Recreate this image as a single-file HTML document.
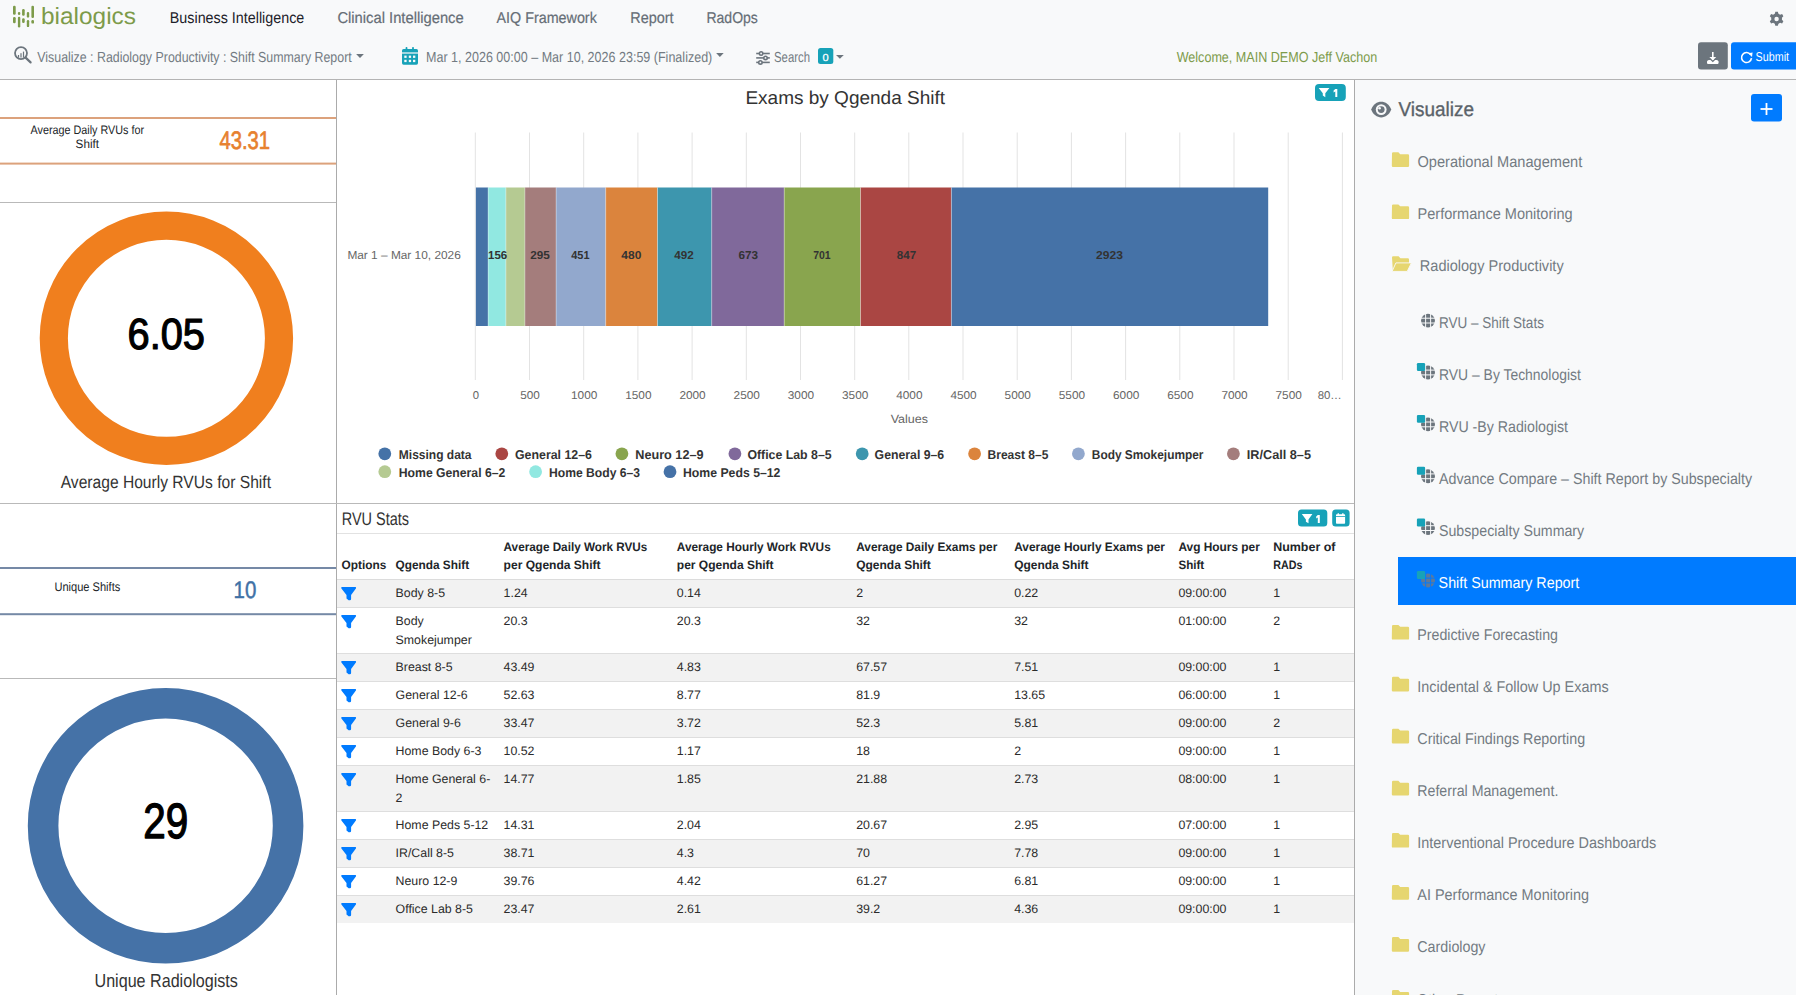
<!DOCTYPE html>
<html lang="en"><head><meta charset="utf-8">
<title>bialogics - Shift Summary Report</title>
<style>
html,body{margin:0;padding:0;background:#ffffff;overflow:hidden;}
body{width:1796px;height:995px;position:relative;font-family:"Liberation Sans",sans-serif;}
svg{position:absolute;left:0;top:0;display:block;}
text{font-family:"Liberation Sans",sans-serif;white-space:pre;text-rendering:geometricPrecision;}
</style></head>
<body>
<svg width="1796" height="995" viewBox="0 0 1796 995">
<rect x="0" y="0" width="1796" height="79" fill="#f8f9fa"/>
<rect x="0" y="79" width="1796" height="1" fill="#b4b4b4"/>
<rect x="0" y="80" width="336" height="915" fill="#ffffff"/>
<rect x="336" y="80" width="1" height="915" fill="#ababab"/>
<rect x="337" y="80" width="1017" height="915" fill="#ffffff"/>
<rect x="1354" y="80" width="1" height="915" fill="#ababab"/>
<rect x="1355" y="80" width="441" height="915" fill="#f8f9fa"/>
<rect x="13.0" y="5.7" width="2.7" height="9.0" fill="#7d9b4a" rx="1.2"/>
<rect x="13.0" y="17.1" width="2.7" height="6.2" fill="#7d9b4a" rx="1.2"/>
<rect x="17.9" y="11.9" width="2.4" height="3.0" fill="#7d9b4a" rx="1.2"/>
<rect x="17.9" y="16.8" width="2.4" height="10.6" fill="#7d9b4a" rx="1.2"/>
<rect x="22.1" y="9.0" width="2.6" height="6.7" fill="#7d9b4a" rx="1.2"/>
<rect x="22.1" y="18.2" width="2.6" height="4.8" fill="#7d9b4a" rx="1.2"/>
<rect x="26.8" y="11.9" width="2.4" height="5.7" fill="#7d9b4a" rx="1.2"/>
<rect x="26.8" y="20.0" width="2.4" height="7.1" fill="#7d9b4a" rx="1.2"/>
<rect x="31.4" y="5.7" width="2.6" height="12.2" fill="#7d9b4a" rx="1.2"/>
<rect x="31.4" y="20.0" width="2.6" height="3.6" fill="#7d9b4a" rx="1.2"/>
<text x="41.0" y="24" font-size="23.50" fill="#7d9b4a" textLength="95.0" lengthAdjust="spacingAndGlyphs">bialogics</text>
<text x="169.8" y="23" font-size="15.70" fill="#1d2129" textLength="134.5" lengthAdjust="spacingAndGlyphs">Business Intelligence</text>
<text x="337.4" y="23" font-size="15.70" fill="#666e76" textLength="126.3" lengthAdjust="spacingAndGlyphs" stroke="#666e76" stroke-width="0.2" stroke-linejoin="round">Clinical Intelligence</text>
<text x="496.5" y="23" font-size="15.70" fill="#666e76" textLength="100.3" lengthAdjust="spacingAndGlyphs" stroke="#666e76" stroke-width="0.2" stroke-linejoin="round">AIQ Framework</text>
<text x="630.2" y="23" font-size="15.70" fill="#666e76" textLength="43.4" lengthAdjust="spacingAndGlyphs" stroke="#666e76" stroke-width="0.2" stroke-linejoin="round">Report</text>
<text x="706.4" y="23" font-size="15.70" fill="#666e76" textLength="51.5" lengthAdjust="spacingAndGlyphs" stroke="#666e76" stroke-width="0.2" stroke-linejoin="round">RadOps</text>
<g transform="translate(1776.6,19.1) scale(1.06)" fill="#6c757d"><path d="M-1.2,-6.9 h2.4 l0.5,1.9 a5,5 0 0 1 1.6,0.9 l1.9,-0.6 l1.2,2.1 l-1.4,1.4 a5,5 0 0 1 0,1.8 l1.4,1.4 l-1.2,2.1 l-1.9,-0.6 a5,5 0 0 1 -1.6,0.9 l-0.5,1.9 h-2.4 l-0.5,-1.9 a5,5 0 0 1 -1.6,-0.9 l-1.9,0.6 l-1.2,-2.1 l1.4,-1.4 a5,5 0 0 1 0,-1.8 l-1.4,-1.4 l1.2,-2.1 l1.9,0.6 a5,5 0 0 1 1.6,-0.9 z"/><circle r="2.1" fill="#f8f9fa"/></g>
<g fill="none" stroke="#6c757d" stroke-width="2"><circle cx="21" cy="53.1" r="6.0" stroke-width="1.8"/><line x1="25.6" y1="57.6" x2="30.6" y2="62.4" stroke-width="2.2" stroke-linecap="round"/></g>
<rect x="17.9" y="55.0" width="1.2" height="2.6" fill="#6c757d"/>
<rect x="20.4" y="53.2" width="1.2" height="4.4" fill="#6c757d"/>
<rect x="22.9" y="51.6" width="1.2" height="6.0" fill="#6c757d"/>
<text x="37.3" y="62" font-size="14.53" fill="#737b82" textLength="314.4" lengthAdjust="spacingAndGlyphs">Visualize : Radiology Productivity : Shift Summary Report</text>
<path d="M356.1,54.1 h7.8 l-3.9,3.8 z" fill="#6c757d"/>
<g fill="#17a2b8"><rect x="402" y="49" width="16" height="15.7" rx="1.6"/><rect x="405.6" y="46.9" width="1.8" height="4" rx="0.8"/><rect x="412.1" y="46.9" width="1.8" height="4" rx="0.8"/></g>
<rect x="404.3" y="55.6" width="2.3" height="2.3" fill="#f8f9fa"/>
<rect x="408.8" y="55.6" width="2.3" height="2.3" fill="#f8f9fa"/>
<rect x="413.0" y="55.6" width="2.3" height="2.3" fill="#f8f9fa"/>
<rect x="404.3" y="59.8" width="2.3" height="2.3" fill="#f8f9fa"/>
<rect x="408.8" y="59.8" width="2.3" height="2.3" fill="#f8f9fa"/>
<rect x="413.0" y="59.8" width="2.3" height="2.3" fill="#f8f9fa"/>
<rect x="402" y="52.4" width="16" height="1.2" fill="#f8f9fa"/>
<text x="426.0" y="62" font-size="14.53" fill="#737b82" textLength="286.3" lengthAdjust="spacingAndGlyphs">Mar 1, 2026 00:00 – Mar 10, 2026 23:59 (Finalized)</text>
<path d="M716.1,52.9 h7.6 l-3.8,4.1 z" fill="#6c757d"/>
<g stroke="#6c757d" stroke-width="1.6" fill="#f8f9fa"><line x1="756.2" y1="53.5" x2="769.8" y2="53.5"/><line x1="756.2" y1="57.9" x2="769.8" y2="57.9"/><line x1="756.2" y1="62.4" x2="769.8" y2="62.4"/><circle cx="761.1" cy="53.5" r="1.7"/><circle cx="765.5" cy="57.9" r="1.7"/><circle cx="760.4" cy="62.4" r="1.7"/></g>
<text x="774.0" y="62" font-size="14.53" fill="#737b82" textLength="36.0" lengthAdjust="spacingAndGlyphs">Search</text>
<rect x="818" y="48" width="15.3" height="15.9" fill="#17a2b8" rx="2.5"/>
<text x="822.6" y="61" font-size="10.17" fill="#ffffff" textLength="6.2" lengthAdjust="spacingAndGlyphs" stroke="#ffffff" stroke-width="0.25" stroke-linejoin="round">0</text>
<path d="M836.0,54.9 h7.8 l-3.9,3.9 z" fill="#6c757d"/>
<text x="1176.7" y="62" font-size="14.53" fill="#7d9b4a" textLength="200.5" lengthAdjust="spacingAndGlyphs">Welcome, MAIN DEMO Jeff Vachon</text>
<rect x="1698" y="42.2" width="29.8" height="27.3" fill="#6c757d" rx="3"/>
<g fill="#ffffff"><rect x="1712" y="52" width="1.6" height="8"/><path d="M1709.4,57 l3.4,3.6 l3.4,-3.6 z"/><path d="M1707,61.5 a2,2 0 0 1 2,-1.5 h1.5 l2.3,2.3 l2.3,-2.3 h1.5 a2,2 0 0 1 2,1.5 v1.6 a0.8,0.8 0 0 1 -0.8,0.8 h-10 a0.8,0.8 0 0 1 -0.8,-0.8 z"/></g>
<rect x="1731" y="42.2" width="70" height="27.3" fill="#007bff" rx="3"/>
<g fill="none" stroke="#ffffff" stroke-width="1.6"><path d="M1750.6,54.6 a5,5 0 1 0 0.9,3.6"/></g><path d="M1748.2,53.2 l4.4,-0.6 l-0.6,4.4 z" fill="#ffffff"/>
<text x="1755.6" y="61" font-size="12.79" fill="#ffffff" textLength="33.4" lengthAdjust="spacingAndGlyphs">Submit</text>
<rect x="0" y="117" width="336" height="2" fill="#dca27c"/>
<rect x="0" y="162.6" width="336" height="2" fill="#dca27c"/>
<text x="30.5" y="134" font-size="12.21" fill="#212529" textLength="113.5" lengthAdjust="spacingAndGlyphs">Average Daily RVUs for</text>
<text x="75.6" y="148" font-size="12.21" fill="#212529" textLength="23.4" lengthAdjust="spacingAndGlyphs">Shift</text>
<text x="219.5" y="149" font-size="25.29" fill="#e7812f" textLength="50.6" lengthAdjust="spacingAndGlyphs" stroke="#e7812f" stroke-width="0.7" stroke-linejoin="round">43.31</text>
<rect x="0" y="202" width="336" height="1" fill="#b9b9b9"/>
<circle cx="166.4" cy="338.3" r="112.6" fill="none" stroke="#f07f1e" stroke-width="28.2"/>
<text x="127.6" y="349" font-size="43.60" fill="#000000" textLength="77.4" lengthAdjust="spacingAndGlyphs" stroke="#000000" stroke-width="1.2" stroke-linejoin="round">6.05</text>
<text x="60.7" y="488" font-size="17.73" fill="#333333" textLength="210.3" lengthAdjust="spacingAndGlyphs">Average Hourly RVUs for Shift</text>
<rect x="0" y="503" width="1354" height="1" fill="#b9b9b9"/>
<rect x="0" y="567" width="336" height="2" fill="#7589a6"/>
<rect x="0" y="613.2" width="336" height="2" fill="#7589a6"/>
<text x="54.4" y="591" font-size="12.50" fill="#212529" textLength="65.9" lengthAdjust="spacingAndGlyphs">Unique Shifts</text>
<text x="233.6" y="598" font-size="23.84" fill="#3f71a6" textLength="22.7" lengthAdjust="spacingAndGlyphs" stroke="#3f71a6" stroke-width="0.5" stroke-linejoin="round">10</text>
<rect x="0" y="678" width="336" height="1" fill="#b9b9b9"/>
<circle cx="165.6" cy="825.8" r="122.5" fill="none" stroke="#4572a7" stroke-width="30.6"/>
<text x="143.2" y="838" font-size="49.42" fill="#000000" textLength="45.0" lengthAdjust="spacingAndGlyphs" stroke="#000000" stroke-width="1.3" stroke-linejoin="round">29</text>
<text x="94.5" y="987" font-size="18.75" fill="#333333" textLength="143.3" lengthAdjust="spacingAndGlyphs">Unique Radiologists</text>
<text x="745.4" y="104" font-size="18.60" fill="#333333" textLength="199.7" lengthAdjust="spacingAndGlyphs">Exams by Qgenda Shift</text>
<rect x="1315" y="84" width="30.8" height="16.9" fill="#17a2b8" rx="4"/>
<path d="M1318.7,88 H1329.4 L1325.3,93.3 V97.2 L1322.8,95.6 V93.3 Z" fill="#ffffff"/>
<path d="M1335.3,89 h2 v8 h-2 v-5.6 l-1.7,1 v-1.9 z" fill="#ffffff"/>
<rect x="474.8" y="132.5" width="1" height="247.5" fill="#e3e3e3"/>
<rect x="529.0" y="132.5" width="1" height="247.5" fill="#e3e3e3"/>
<rect x="583.2" y="132.5" width="1" height="247.5" fill="#e3e3e3"/>
<rect x="637.4" y="132.5" width="1" height="247.5" fill="#e3e3e3"/>
<rect x="691.6" y="132.5" width="1" height="247.5" fill="#e3e3e3"/>
<rect x="745.8" y="132.5" width="1" height="247.5" fill="#e3e3e3"/>
<rect x="800.0" y="132.5" width="1" height="247.5" fill="#e3e3e3"/>
<rect x="854.2" y="132.5" width="1" height="247.5" fill="#e3e3e3"/>
<rect x="908.3" y="132.5" width="1" height="247.5" fill="#e3e3e3"/>
<rect x="962.5" y="132.5" width="1" height="247.5" fill="#e3e3e3"/>
<rect x="1016.7" y="132.5" width="1" height="247.5" fill="#e3e3e3"/>
<rect x="1070.9" y="132.5" width="1" height="247.5" fill="#e3e3e3"/>
<rect x="1125.1" y="132.5" width="1" height="247.5" fill="#e3e3e3"/>
<rect x="1179.3" y="132.5" width="1" height="247.5" fill="#e3e3e3"/>
<rect x="1233.5" y="132.5" width="1" height="247.5" fill="#e3e3e3"/>
<rect x="1287.7" y="132.5" width="1" height="247.5" fill="#e3e3e3"/>
<rect x="1341.9" y="132.5" width="1" height="247.5" fill="#e3e3e3"/>
<rect x="475.9" y="187.5" width="12.2" height="138.5" fill="#4572a7"/>
<rect x="488.1" y="187.5" width="17.8" height="138.5" fill="#91e8e1"/>
<rect x="505.9" y="187.5" width="19.0" height="138.5" fill="#b5ca92"/>
<rect x="524.9" y="187.5" width="31.2" height="138.5" fill="#a47d7c"/>
<rect x="556.1" y="187.5" width="49.6" height="138.5" fill="#92a8cd"/>
<rect x="605.7" y="187.5" width="51.8" height="138.5" fill="#db843d"/>
<rect x="657.5" y="187.5" width="54.2" height="138.5" fill="#3d96ae"/>
<rect x="711.7" y="187.5" width="72.5" height="138.5" fill="#80699b"/>
<rect x="784.2" y="187.5" width="76.3" height="138.5" fill="#89a54e"/>
<rect x="860.5" y="187.5" width="90.9" height="138.5" fill="#aa4643"/>
<rect x="951.4" y="187.5" width="316.8" height="138.5" fill="#4572a7"/>
<rect x="487.6" y="187.5" width="1" height="138.5" fill="#ffffff" fill-opacity="0.35"/>
<rect x="505.4" y="187.5" width="1" height="138.5" fill="#ffffff" fill-opacity="0.35"/>
<rect x="524.4" y="187.5" width="1" height="138.5" fill="#ffffff" fill-opacity="0.35"/>
<rect x="555.6" y="187.5" width="1" height="138.5" fill="#ffffff" fill-opacity="0.35"/>
<rect x="605.2" y="187.5" width="1" height="138.5" fill="#ffffff" fill-opacity="0.35"/>
<rect x="657.0" y="187.5" width="1" height="138.5" fill="#ffffff" fill-opacity="0.35"/>
<rect x="711.2" y="187.5" width="1" height="138.5" fill="#ffffff" fill-opacity="0.35"/>
<rect x="783.7" y="187.5" width="1" height="138.5" fill="#ffffff" fill-opacity="0.35"/>
<rect x="860.0" y="187.5" width="1" height="138.5" fill="#ffffff" fill-opacity="0.35"/>
<rect x="950.9" y="187.5" width="1" height="138.5" fill="#ffffff" fill-opacity="0.35"/>
<text x="488.1" y="259" font-size="11.48" fill="#333333" font-weight="bold" textLength="19.1" lengthAdjust="spacingAndGlyphs">156</text>
<text x="530.3" y="259" font-size="11.48" fill="#333333" font-weight="bold" textLength="19.6" lengthAdjust="spacingAndGlyphs">295</text>
<text x="571.2" y="259" font-size="11.48" fill="#333333" font-weight="bold" textLength="18.3" lengthAdjust="spacingAndGlyphs">451</text>
<text x="621.3" y="259" font-size="11.48" fill="#333333" font-weight="bold" textLength="20.0" lengthAdjust="spacingAndGlyphs">480</text>
<text x="674.2" y="259" font-size="11.48" fill="#333333" font-weight="bold" textLength="19.5" lengthAdjust="spacingAndGlyphs">492</text>
<text x="738.4" y="259" font-size="11.48" fill="#333333" font-weight="bold" textLength="19.6" lengthAdjust="spacingAndGlyphs">673</text>
<text x="813.2" y="259" font-size="11.48" fill="#333333" font-weight="bold" textLength="17.5" lengthAdjust="spacingAndGlyphs">701</text>
<text x="896.8" y="259" font-size="11.48" fill="#333333" font-weight="bold" textLength="19.3" lengthAdjust="spacingAndGlyphs">847</text>
<text x="1096.0" y="259" font-size="11.48" fill="#333333" font-weight="bold" textLength="26.9" lengthAdjust="spacingAndGlyphs">2923</text>
<text x="347.4" y="259" font-size="11.63" fill="#666666" textLength="113.4" lengthAdjust="spacingAndGlyphs">Mar 1 – Mar 10, 2026</text>
<text x="472.7" y="399" font-size="11.34" fill="#666666" textLength="6.3" lengthAdjust="spacingAndGlyphs">0</text>
<text x="520.2" y="399" font-size="11.34" fill="#666666" textLength="19.6" lengthAdjust="spacingAndGlyphs">500</text>
<text x="571.0" y="399" font-size="11.34" fill="#666666" textLength="26.3" lengthAdjust="spacingAndGlyphs">1000</text>
<text x="625.2" y="399" font-size="11.34" fill="#666666" textLength="26.3" lengthAdjust="spacingAndGlyphs">1500</text>
<text x="679.4" y="399" font-size="11.34" fill="#666666" textLength="26.3" lengthAdjust="spacingAndGlyphs">2000</text>
<text x="733.6" y="399" font-size="11.34" fill="#666666" textLength="26.3" lengthAdjust="spacingAndGlyphs">2500</text>
<text x="787.8" y="399" font-size="11.34" fill="#666666" textLength="26.3" lengthAdjust="spacingAndGlyphs">3000</text>
<text x="842.0" y="399" font-size="11.34" fill="#666666" textLength="26.3" lengthAdjust="spacingAndGlyphs">3500</text>
<text x="896.2" y="399" font-size="11.34" fill="#666666" textLength="26.3" lengthAdjust="spacingAndGlyphs">4000</text>
<text x="950.4" y="399" font-size="11.34" fill="#666666" textLength="26.3" lengthAdjust="spacingAndGlyphs">4500</text>
<text x="1004.6" y="399" font-size="11.34" fill="#666666" textLength="26.3" lengthAdjust="spacingAndGlyphs">5000</text>
<text x="1058.8" y="399" font-size="11.34" fill="#666666" textLength="26.3" lengthAdjust="spacingAndGlyphs">5500</text>
<text x="1113.0" y="399" font-size="11.34" fill="#666666" textLength="26.3" lengthAdjust="spacingAndGlyphs">6000</text>
<text x="1167.2" y="399" font-size="11.34" fill="#666666" textLength="26.3" lengthAdjust="spacingAndGlyphs">6500</text>
<text x="1221.4" y="399" font-size="11.34" fill="#666666" textLength="26.3" lengthAdjust="spacingAndGlyphs">7000</text>
<text x="1275.5" y="399" font-size="11.34" fill="#666666" textLength="26.3" lengthAdjust="spacingAndGlyphs">7500</text>
<text x="1317.7" y="399" font-size="11.34" fill="#666666" textLength="24.1" lengthAdjust="spacingAndGlyphs">80…</text>
<text x="890.7" y="423" font-size="11.92" fill="#666666" textLength="37.4" lengthAdjust="spacingAndGlyphs">Values</text>
<circle cx="384.8" cy="453.8" r="6.4" fill="#4572a7"/>
<text x="398.8" y="459" font-size="12.79" fill="#333333" font-weight="bold" textLength="72.7" lengthAdjust="spacingAndGlyphs">Missing data</text>
<circle cx="501.8" cy="453.8" r="6.4" fill="#aa4643"/>
<text x="515.0" y="459" font-size="12.79" fill="#333333" font-weight="bold" textLength="77.0" lengthAdjust="spacingAndGlyphs">General 12–6</text>
<circle cx="621.9" cy="453.8" r="6.4" fill="#89a54e"/>
<text x="635.3" y="459" font-size="12.79" fill="#333333" font-weight="bold" textLength="68.2" lengthAdjust="spacingAndGlyphs">Neuro 12–9</text>
<circle cx="734.9" cy="453.8" r="6.4" fill="#80699b"/>
<text x="747.4" y="459" font-size="12.79" fill="#333333" font-weight="bold" textLength="84.2" lengthAdjust="spacingAndGlyphs">Office Lab 8–5</text>
<circle cx="862.2" cy="453.8" r="6.4" fill="#3d96ae"/>
<text x="874.6" y="459" font-size="12.79" fill="#333333" font-weight="bold" textLength="69.6" lengthAdjust="spacingAndGlyphs">General 9–6</text>
<circle cx="974.6" cy="453.8" r="6.4" fill="#db843d"/>
<text x="987.5" y="459" font-size="12.79" fill="#333333" font-weight="bold" textLength="60.9" lengthAdjust="spacingAndGlyphs">Breast 8–5</text>
<circle cx="1078.4" cy="453.8" r="6.4" fill="#92a8cd"/>
<text x="1091.8" y="459" font-size="12.79" fill="#333333" font-weight="bold" textLength="111.7" lengthAdjust="spacingAndGlyphs">Body Smokejumper</text>
<circle cx="1233.4" cy="453.8" r="6.4" fill="#a47d7c"/>
<text x="1246.8" y="459" font-size="12.79" fill="#333333" font-weight="bold" textLength="64.2" lengthAdjust="spacingAndGlyphs">IR/Call 8–5</text>
<circle cx="384.8" cy="471.7" r="6.4" fill="#b5ca92"/>
<text x="398.8" y="477" font-size="12.79" fill="#333333" font-weight="bold" textLength="106.5" lengthAdjust="spacingAndGlyphs">Home General 6–2</text>
<circle cx="535.6" cy="471.7" r="6.4" fill="#91e8e1"/>
<text x="549.0" y="477" font-size="12.79" fill="#333333" font-weight="bold" textLength="91.0" lengthAdjust="spacingAndGlyphs">Home Body 6–3</text>
<circle cx="670.0" cy="471.7" r="6.4" fill="#4572a7"/>
<text x="683.0" y="477" font-size="12.79" fill="#333333" font-weight="bold" textLength="97.4" lengthAdjust="spacingAndGlyphs">Home Peds 5–12</text>
<text x="341.7" y="525" font-size="18.31" fill="#333333" textLength="67.3" lengthAdjust="spacingAndGlyphs">RVU Stats</text>
<rect x="1298" y="509.6" width="29.3" height="17" fill="#17a2b8" rx="3.5"/>
<path d="M1301.8,514 H1312.4 L1308.5,519.4 V523.2 L1305.9,521.7 V519.4 Z" fill="#ffffff"/>
<path d="M1317.8,515.1 h2 v7.9 h-2 v-5.5 l-1.6,1 v-1.9 z" fill="#ffffff"/>
<rect x="1332.2" y="509.6" width="17.4" height="17" fill="#17a2b8" rx="3.5"/>
<g fill="#ffffff"><rect x="1336" y="514.3" width="9.1" height="9.5" rx="0.8"/><rect x="1337.6" y="513.2" width="1.3" height="2"/><rect x="1342.2" y="513.2" width="1.3" height="2"/></g>
<rect x="1336" y="516.2" width="9.1" height="0.8" fill="#17a2b8"/>
<rect x="337" y="533" width="1017" height="1" fill="#e2e2e2"/>
<text x="341.5" y="569" font-size="12.21" fill="#212529" font-weight="bold" textLength="44.8" lengthAdjust="spacingAndGlyphs">Options</text>
<text x="395.5" y="569" font-size="12.21" fill="#212529" font-weight="bold" textLength="73.6" lengthAdjust="spacingAndGlyphs">Qgenda Shift</text>
<text x="503.6" y="551" font-size="12.21" fill="#212529" font-weight="bold" textLength="143.7" lengthAdjust="spacingAndGlyphs">Average Daily Work RVUs</text>
<text x="503.6" y="569" font-size="12.21" fill="#212529" font-weight="bold" textLength="97.0" lengthAdjust="spacingAndGlyphs">per Qgenda Shift</text>
<text x="676.8" y="551" font-size="12.21" fill="#212529" font-weight="bold" textLength="153.9" lengthAdjust="spacingAndGlyphs">Average Hourly Work RVUs</text>
<text x="676.8" y="569" font-size="12.21" fill="#212529" font-weight="bold" textLength="96.8" lengthAdjust="spacingAndGlyphs">per Qgenda Shift</text>
<text x="856.2" y="551" font-size="12.21" fill="#212529" font-weight="bold" textLength="141.1" lengthAdjust="spacingAndGlyphs">Average Daily Exams per</text>
<text x="856.2" y="569" font-size="12.21" fill="#212529" font-weight="bold" textLength="74.6" lengthAdjust="spacingAndGlyphs">Qgenda Shift</text>
<text x="1014.2" y="551" font-size="12.21" fill="#212529" font-weight="bold" textLength="150.7" lengthAdjust="spacingAndGlyphs">Average Hourly Exams per</text>
<text x="1014.2" y="569" font-size="12.21" fill="#212529" font-weight="bold" textLength="74.4" lengthAdjust="spacingAndGlyphs">Qgenda Shift</text>
<text x="1178.4" y="551" font-size="12.21" fill="#212529" font-weight="bold" textLength="81.4" lengthAdjust="spacingAndGlyphs">Avg Hours per</text>
<text x="1178.4" y="569" font-size="12.21" fill="#212529" font-weight="bold" textLength="25.8" lengthAdjust="spacingAndGlyphs">Shift</text>
<text x="1273.2" y="551" font-size="12.21" fill="#212529" font-weight="bold" textLength="62.3" lengthAdjust="spacingAndGlyphs">Number of</text>
<text x="1273.2" y="569" font-size="12.21" fill="#212529" font-weight="bold" textLength="29.2" lengthAdjust="spacingAndGlyphs">RADs</text>
<rect x="337" y="579" width="1017" height="1" fill="#dcdcdc"/>
<rect x="337" y="580" width="1017" height="27" fill="#f2f2f2"/>
<rect x="337" y="607" width="1017" height="1" fill="#dedede"/>
<path d="M341.6,587.0 H355.7 Q356.4,587.6 355.9,588.5 L351.1,595.0 V599.0 Q351,600.2 349.8,600.2 H348.6 L346.5,598.6 V595.0 L341.4,588.5 Q341,587.5 341.6,587.0 Z" fill="#007bff"/>
<text x="395.6" y="597" font-size="12.35" fill="#2b2b2b">Body 8-5</text>
<text x="503.6" y="597" font-size="12.35" fill="#2b2b2b">1.24</text>
<text x="676.8" y="597" font-size="12.35" fill="#2b2b2b">0.14</text>
<text x="856.2" y="597" font-size="12.35" fill="#2b2b2b">2</text>
<text x="1014.2" y="597" font-size="12.35" fill="#2b2b2b">0.22</text>
<text x="1178.4" y="597" font-size="12.35" fill="#2b2b2b">09:00:00</text>
<text x="1273.2" y="597" font-size="12.35" fill="#2b2b2b">1</text>
<rect x="337" y="653" width="1017" height="1" fill="#dedede"/>
<path d="M341.6,615.0 H355.7 Q356.4,615.6 355.9,616.5 L351.1,623.0 V627.0 Q351,628.2 349.8,628.2 H348.6 L346.5,626.6 V623.0 L341.4,616.5 Q341,615.5 341.6,615.0 Z" fill="#007bff"/>
<text x="395.6" y="625" font-size="12.35" fill="#2b2b2b">Body</text>
<text x="395.6" y="644" font-size="12.35" fill="#2b2b2b">Smokejumper</text>
<text x="503.6" y="625" font-size="12.35" fill="#2b2b2b">20.3</text>
<text x="676.8" y="625" font-size="12.35" fill="#2b2b2b">20.3</text>
<text x="856.2" y="625" font-size="12.35" fill="#2b2b2b">32</text>
<text x="1014.2" y="625" font-size="12.35" fill="#2b2b2b">32</text>
<text x="1178.4" y="625" font-size="12.35" fill="#2b2b2b">01:00:00</text>
<text x="1273.2" y="625" font-size="12.35" fill="#2b2b2b">2</text>
<rect x="337" y="654" width="1017" height="27" fill="#f2f2f2"/>
<rect x="337" y="681" width="1017" height="1" fill="#dedede"/>
<path d="M341.6,661.0 H355.7 Q356.4,661.6 355.9,662.5 L351.1,669.0 V673.0 Q351,674.2 349.8,674.2 H348.6 L346.5,672.6 V669.0 L341.4,662.5 Q341,661.5 341.6,661.0 Z" fill="#007bff"/>
<text x="395.6" y="671" font-size="12.35" fill="#2b2b2b">Breast 8-5</text>
<text x="503.6" y="671" font-size="12.35" fill="#2b2b2b">43.49</text>
<text x="676.8" y="671" font-size="12.35" fill="#2b2b2b">4.83</text>
<text x="856.2" y="671" font-size="12.35" fill="#2b2b2b">67.57</text>
<text x="1014.2" y="671" font-size="12.35" fill="#2b2b2b">7.51</text>
<text x="1178.4" y="671" font-size="12.35" fill="#2b2b2b">09:00:00</text>
<text x="1273.2" y="671" font-size="12.35" fill="#2b2b2b">1</text>
<rect x="337" y="709" width="1017" height="1" fill="#dedede"/>
<path d="M341.6,689.0 H355.7 Q356.4,689.6 355.9,690.5 L351.1,697.0 V701.0 Q351,702.2 349.8,702.2 H348.6 L346.5,700.6 V697.0 L341.4,690.5 Q341,689.5 341.6,689.0 Z" fill="#007bff"/>
<text x="395.6" y="699" font-size="12.35" fill="#2b2b2b">General 12-6</text>
<text x="503.6" y="699" font-size="12.35" fill="#2b2b2b">52.63</text>
<text x="676.8" y="699" font-size="12.35" fill="#2b2b2b">8.77</text>
<text x="856.2" y="699" font-size="12.35" fill="#2b2b2b">81.9</text>
<text x="1014.2" y="699" font-size="12.35" fill="#2b2b2b">13.65</text>
<text x="1178.4" y="699" font-size="12.35" fill="#2b2b2b">06:00:00</text>
<text x="1273.2" y="699" font-size="12.35" fill="#2b2b2b">1</text>
<rect x="337" y="710" width="1017" height="27" fill="#f2f2f2"/>
<rect x="337" y="737" width="1017" height="1" fill="#dedede"/>
<path d="M341.6,717.0 H355.7 Q356.4,717.6 355.9,718.5 L351.1,725.0 V729.0 Q351,730.2 349.8,730.2 H348.6 L346.5,728.6 V725.0 L341.4,718.5 Q341,717.5 341.6,717.0 Z" fill="#007bff"/>
<text x="395.6" y="727" font-size="12.35" fill="#2b2b2b">General 9-6</text>
<text x="503.6" y="727" font-size="12.35" fill="#2b2b2b">33.47</text>
<text x="676.8" y="727" font-size="12.35" fill="#2b2b2b">3.72</text>
<text x="856.2" y="727" font-size="12.35" fill="#2b2b2b">52.3</text>
<text x="1014.2" y="727" font-size="12.35" fill="#2b2b2b">5.81</text>
<text x="1178.4" y="727" font-size="12.35" fill="#2b2b2b">09:00:00</text>
<text x="1273.2" y="727" font-size="12.35" fill="#2b2b2b">2</text>
<rect x="337" y="765" width="1017" height="1" fill="#dedede"/>
<path d="M341.6,745.0 H355.7 Q356.4,745.6 355.9,746.5 L351.1,753.0 V757.0 Q351,758.2 349.8,758.2 H348.6 L346.5,756.6 V753.0 L341.4,746.5 Q341,745.5 341.6,745.0 Z" fill="#007bff"/>
<text x="395.6" y="755" font-size="12.35" fill="#2b2b2b">Home Body 6-3</text>
<text x="503.6" y="755" font-size="12.35" fill="#2b2b2b">10.52</text>
<text x="676.8" y="755" font-size="12.35" fill="#2b2b2b">1.17</text>
<text x="856.2" y="755" font-size="12.35" fill="#2b2b2b">18</text>
<text x="1014.2" y="755" font-size="12.35" fill="#2b2b2b">2</text>
<text x="1178.4" y="755" font-size="12.35" fill="#2b2b2b">09:00:00</text>
<text x="1273.2" y="755" font-size="12.35" fill="#2b2b2b">1</text>
<rect x="337" y="766" width="1017" height="45" fill="#f2f2f2"/>
<rect x="337" y="811" width="1017" height="1" fill="#dedede"/>
<path d="M341.6,773.0 H355.7 Q356.4,773.6 355.9,774.5 L351.1,781.0 V785.0 Q351,786.2 349.8,786.2 H348.6 L346.5,784.6 V781.0 L341.4,774.5 Q341,773.5 341.6,773.0 Z" fill="#007bff"/>
<text x="395.6" y="783" font-size="12.35" fill="#2b2b2b">Home General 6-</text>
<text x="395.6" y="802" font-size="12.35" fill="#2b2b2b">2</text>
<text x="503.6" y="783" font-size="12.35" fill="#2b2b2b">14.77</text>
<text x="676.8" y="783" font-size="12.35" fill="#2b2b2b">1.85</text>
<text x="856.2" y="783" font-size="12.35" fill="#2b2b2b">21.88</text>
<text x="1014.2" y="783" font-size="12.35" fill="#2b2b2b">2.73</text>
<text x="1178.4" y="783" font-size="12.35" fill="#2b2b2b">08:00:00</text>
<text x="1273.2" y="783" font-size="12.35" fill="#2b2b2b">1</text>
<rect x="337" y="839" width="1017" height="1" fill="#dedede"/>
<path d="M341.6,819.0 H355.7 Q356.4,819.6 355.9,820.5 L351.1,827.0 V831.0 Q351,832.2 349.8,832.2 H348.6 L346.5,830.6 V827.0 L341.4,820.5 Q341,819.5 341.6,819.0 Z" fill="#007bff"/>
<text x="395.6" y="829" font-size="12.35" fill="#2b2b2b">Home Peds 5-12</text>
<text x="503.6" y="829" font-size="12.35" fill="#2b2b2b">14.31</text>
<text x="676.8" y="829" font-size="12.35" fill="#2b2b2b">2.04</text>
<text x="856.2" y="829" font-size="12.35" fill="#2b2b2b">20.67</text>
<text x="1014.2" y="829" font-size="12.35" fill="#2b2b2b">2.95</text>
<text x="1178.4" y="829" font-size="12.35" fill="#2b2b2b">07:00:00</text>
<text x="1273.2" y="829" font-size="12.35" fill="#2b2b2b">1</text>
<rect x="337" y="840" width="1017" height="27" fill="#f2f2f2"/>
<rect x="337" y="867" width="1017" height="1" fill="#dedede"/>
<path d="M341.6,847.0 H355.7 Q356.4,847.6 355.9,848.5 L351.1,855.0 V859.0 Q351,860.2 349.8,860.2 H348.6 L346.5,858.6 V855.0 L341.4,848.5 Q341,847.5 341.6,847.0 Z" fill="#007bff"/>
<text x="395.6" y="857" font-size="12.35" fill="#2b2b2b">IR/Call 8-5</text>
<text x="503.6" y="857" font-size="12.35" fill="#2b2b2b">38.71</text>
<text x="676.8" y="857" font-size="12.35" fill="#2b2b2b">4.3</text>
<text x="856.2" y="857" font-size="12.35" fill="#2b2b2b">70</text>
<text x="1014.2" y="857" font-size="12.35" fill="#2b2b2b">7.78</text>
<text x="1178.4" y="857" font-size="12.35" fill="#2b2b2b">09:00:00</text>
<text x="1273.2" y="857" font-size="12.35" fill="#2b2b2b">1</text>
<rect x="337" y="895" width="1017" height="1" fill="#dedede"/>
<path d="M341.6,875.0 H355.7 Q356.4,875.6 355.9,876.5 L351.1,883.0 V887.0 Q351,888.2 349.8,888.2 H348.6 L346.5,886.6 V883.0 L341.4,876.5 Q341,875.5 341.6,875.0 Z" fill="#007bff"/>
<text x="395.6" y="885" font-size="12.35" fill="#2b2b2b">Neuro 12-9</text>
<text x="503.6" y="885" font-size="12.35" fill="#2b2b2b">39.76</text>
<text x="676.8" y="885" font-size="12.35" fill="#2b2b2b">4.42</text>
<text x="856.2" y="885" font-size="12.35" fill="#2b2b2b">61.27</text>
<text x="1014.2" y="885" font-size="12.35" fill="#2b2b2b">6.81</text>
<text x="1178.4" y="885" font-size="12.35" fill="#2b2b2b">09:00:00</text>
<text x="1273.2" y="885" font-size="12.35" fill="#2b2b2b">1</text>
<rect x="337" y="896" width="1017" height="27" fill="#f2f2f2"/>
<path d="M341.6,903.0 H355.7 Q356.4,903.6 355.9,904.5 L351.1,911.0 V915.0 Q351,916.2 349.8,916.2 H348.6 L346.5,914.6 V911.0 L341.4,904.5 Q341,903.5 341.6,903.0 Z" fill="#007bff"/>
<text x="395.6" y="913" font-size="12.35" fill="#2b2b2b">Office Lab 8-5</text>
<text x="503.6" y="913" font-size="12.35" fill="#2b2b2b">23.47</text>
<text x="676.8" y="913" font-size="12.35" fill="#2b2b2b">2.61</text>
<text x="856.2" y="913" font-size="12.35" fill="#2b2b2b">39.2</text>
<text x="1014.2" y="913" font-size="12.35" fill="#2b2b2b">4.36</text>
<text x="1178.4" y="913" font-size="12.35" fill="#2b2b2b">09:00:00</text>
<text x="1273.2" y="913" font-size="12.35" fill="#2b2b2b">1</text>
<g transform="translate(1381.2,109.6)"><path d="M-10,0 C-6.5,-10.4 6.5,-10.4 10,0 C6.5,10.4 -6.5,10.4 -10,0 z" fill="#6c757d"/><circle r="5.4" fill="#f8f9fa"/><circle r="3.4" fill="#6c757d"/><circle cx="-1.6" cy="-1.4" r="1.3" fill="#f8f9fa"/></g>
<text x="1398.6" y="116" font-size="20.06" fill="#5a6268" textLength="75.4" lengthAdjust="spacingAndGlyphs" stroke="#5a6268" stroke-width="0.35" stroke-linejoin="round">Visualize</text>
<rect x="1751" y="94.1" width="31" height="27.4" fill="#007bff" rx="3"/>
<rect x="1760.5" y="108.1" width="12" height="1.8" fill="#ffffff"/>
<rect x="1765.6" y="103.0" width="1.8" height="12" fill="#ffffff"/>
<path d="M1392,153.5 a1.2,1.2 0 0 1 1.2,-1.2 h5.2 l1.8,1.9 h7.7 a1.2,1.2 0 0 1 1.2,1.2 v10.4 a1.2,1.2 0 0 1 -1.2,1.2 h-14.9 a1.2,1.2 0 0 1 -1.2,-1.2 z" fill="#e6d670"/>
<text x="1417.5" y="167" font-size="15.70" fill="#737b82" textLength="164.7" lengthAdjust="spacingAndGlyphs">Operational Management</text>
<path d="M1392,205.6 a1.2,1.2 0 0 1 1.2,-1.2 h5.2 l1.8,1.9 h7.7 a1.2,1.2 0 0 1 1.2,1.2 v10.4 a1.2,1.2 0 0 1 -1.2,1.2 h-14.9 a1.2,1.2 0 0 1 -1.2,-1.2 z" fill="#e6d670"/>
<text x="1417.5" y="219" font-size="15.70" fill="#737b82" textLength="155.2" lengthAdjust="spacingAndGlyphs">Performance Monitoring</text>
<path d="M1392,257.4 a1.2,1.2 0 0 1 1.2,-1.2 h5.4 l1.8,2 h7.4 a1.2,1.2 0 0 1 1.2,1.2 v3.6 h-12 l-4.1,8.4 z" fill="#e6d670"/><path d="M1395.9,262.9 H1411.4 L1407.2,271.4 H1392.1 Z" fill="#e6d670" stroke="#f8f9fa" stroke-width="0.9" stroke-linejoin="round"/>
<text x="1419.8" y="271" font-size="15.70" fill="#737b82" textLength="143.9" lengthAdjust="spacingAndGlyphs">Radiology Productivity</text>
<circle cx="1428.0" cy="320.6" r="6.95" fill="#6c757d"/><g fill="#f8f9fa"><rect x="1425.1" y="313.6" width="1" height="14"/><rect x="1430.1" y="313.6" width="1" height="14"/><rect x="1421.0" y="317.7" width="14" height="1"/><rect x="1421.0" y="322.5" width="14" height="1"/></g>
<text x="1439.0" y="328" font-size="15.70" fill="#737b82" textLength="104.9" lengthAdjust="spacingAndGlyphs">RVU – Shift Stats</text>
<circle cx="1428.0" cy="372.5" r="6.95" fill="#6c757d"/><g fill="#f8f9fa"><rect x="1425.1" y="365.5" width="1" height="14"/><rect x="1430.1" y="365.5" width="1" height="14"/><rect x="1421.0" y="369.6" width="14" height="1"/><rect x="1421.0" y="374.4" width="14" height="1"/></g>
<rect x="1416.9" y="363.0" width="8.2" height="7.9" fill="#17a2b8" rx="1.2"/>
<text x="1439.0" y="380" font-size="15.70" fill="#737b82" textLength="141.8" lengthAdjust="spacingAndGlyphs">RVU – By Technologist</text>
<circle cx="1428.0" cy="424.4" r="6.95" fill="#6c757d"/><g fill="#f8f9fa"><rect x="1425.1" y="417.4" width="1" height="14"/><rect x="1430.1" y="417.4" width="1" height="14"/><rect x="1421.0" y="421.5" width="14" height="1"/><rect x="1421.0" y="426.3" width="14" height="1"/></g>
<rect x="1416.9" y="414.9" width="8.2" height="7.9" fill="#17a2b8" rx="1.2"/>
<text x="1439.0" y="432" font-size="15.70" fill="#737b82" textLength="129.0" lengthAdjust="spacingAndGlyphs">RVU -By Radiologist</text>
<circle cx="1428.0" cy="476.3" r="6.95" fill="#6c757d"/><g fill="#f8f9fa"><rect x="1425.1" y="469.3" width="1" height="14"/><rect x="1430.1" y="469.3" width="1" height="14"/><rect x="1421.0" y="473.4" width="14" height="1"/><rect x="1421.0" y="478.2" width="14" height="1"/></g>
<rect x="1416.9" y="466.8" width="8.2" height="7.9" fill="#17a2b8" rx="1.2"/>
<text x="1439.0" y="484" font-size="15.70" fill="#737b82" textLength="313.1" lengthAdjust="spacingAndGlyphs">Advance Compare – Shift Report by Subspecialty</text>
<circle cx="1428.0" cy="528.1" r="6.95" fill="#6c757d"/><g fill="#f8f9fa"><rect x="1425.1" y="521.1" width="1" height="14"/><rect x="1430.1" y="521.1" width="1" height="14"/><rect x="1421.0" y="525.2" width="14" height="1"/><rect x="1421.0" y="530.0" width="14" height="1"/></g>
<rect x="1416.9" y="518.6" width="8.2" height="7.9" fill="#17a2b8" rx="1.2"/>
<text x="1439.0" y="536" font-size="15.70" fill="#737b82" textLength="145.2" lengthAdjust="spacingAndGlyphs">Subspecialty Summary</text>
<rect x="1398" y="557" width="398" height="48" fill="#007bff"/>
<circle cx="1428.0" cy="580.5" r="6.95" fill="#5f7a99"/><g fill="#007bff"><rect x="1425.1" y="573.5" width="1" height="14"/><rect x="1430.1" y="573.5" width="1" height="14"/><rect x="1421.0" y="577.6" width="14" height="1"/><rect x="1421.0" y="582.4" width="14" height="1"/></g>
<rect x="1416.9" y="571.0" width="8.2" height="7.9" fill="#17a2b8" rx="1.2"/>
<text x="1438.6" y="588" font-size="15.70" fill="#ffffff" textLength="140.7" lengthAdjust="spacingAndGlyphs">Shift Summary Report</text>
<path d="M1392,626.1 a1.2,1.2 0 0 1 1.2,-1.2 h5.2 l1.8,1.9 h7.7 a1.2,1.2 0 0 1 1.2,1.2 v10.4 a1.2,1.2 0 0 1 -1.2,1.2 h-14.9 a1.2,1.2 0 0 1 -1.2,-1.2 z" fill="#e6d670"/>
<text x="1417.3" y="640" font-size="15.70" fill="#737b82" textLength="140.7" lengthAdjust="spacingAndGlyphs">Predictive Forecasting</text>
<path d="M1392,678.0 a1.2,1.2 0 0 1 1.2,-1.2 h5.2 l1.8,1.9 h7.7 a1.2,1.2 0 0 1 1.2,1.2 v10.4 a1.2,1.2 0 0 1 -1.2,1.2 h-14.9 a1.2,1.2 0 0 1 -1.2,-1.2 z" fill="#e6d670"/>
<text x="1417.3" y="692" font-size="15.70" fill="#737b82" textLength="191.3" lengthAdjust="spacingAndGlyphs">Incidental &amp; Follow Up Exams</text>
<path d="M1392,729.9 a1.2,1.2 0 0 1 1.2,-1.2 h5.2 l1.8,1.9 h7.7 a1.2,1.2 0 0 1 1.2,1.2 v10.4 a1.2,1.2 0 0 1 -1.2,1.2 h-14.9 a1.2,1.2 0 0 1 -1.2,-1.2 z" fill="#e6d670"/>
<text x="1417.3" y="744" font-size="15.70" fill="#737b82" textLength="167.8" lengthAdjust="spacingAndGlyphs">Critical Findings Reporting</text>
<path d="M1392,782.0 a1.2,1.2 0 0 1 1.2,-1.2 h5.2 l1.8,1.9 h7.7 a1.2,1.2 0 0 1 1.2,1.2 v10.4 a1.2,1.2 0 0 1 -1.2,1.2 h-14.9 a1.2,1.2 0 0 1 -1.2,-1.2 z" fill="#e6d670"/>
<text x="1417.3" y="796" font-size="15.70" fill="#737b82" textLength="141.1" lengthAdjust="spacingAndGlyphs">Referral Management.</text>
<path d="M1392,834.1 a1.2,1.2 0 0 1 1.2,-1.2 h5.2 l1.8,1.9 h7.7 a1.2,1.2 0 0 1 1.2,1.2 v10.4 a1.2,1.2 0 0 1 -1.2,1.2 h-14.9 a1.2,1.2 0 0 1 -1.2,-1.2 z" fill="#e6d670"/>
<text x="1417.3" y="848" font-size="15.70" fill="#737b82" textLength="239.0" lengthAdjust="spacingAndGlyphs">Interventional Procedure Dashboards</text>
<path d="M1392,886.2 a1.2,1.2 0 0 1 1.2,-1.2 h5.2 l1.8,1.9 h7.7 a1.2,1.2 0 0 1 1.2,1.2 v10.4 a1.2,1.2 0 0 1 -1.2,1.2 h-14.9 a1.2,1.2 0 0 1 -1.2,-1.2 z" fill="#e6d670"/>
<text x="1417.3" y="900" font-size="15.70" fill="#737b82" textLength="171.7" lengthAdjust="spacingAndGlyphs">AI Performance Monitoring</text>
<path d="M1392,938.2 a1.2,1.2 0 0 1 1.2,-1.2 h5.2 l1.8,1.9 h7.7 a1.2,1.2 0 0 1 1.2,1.2 v10.4 a1.2,1.2 0 0 1 -1.2,1.2 h-14.9 a1.2,1.2 0 0 1 -1.2,-1.2 z" fill="#e6d670"/>
<text x="1417.3" y="952" font-size="15.70" fill="#737b82" textLength="68.2" lengthAdjust="spacingAndGlyphs">Cardiology</text>
<path d="M1392,991.2 a1.2,1.2 0 0 1 1.2,-1.2 h5.2 l1.8,1.9 h7.7 a1.2,1.2 0 0 1 1.2,1.2 v10.4 a1.2,1.2 0 0 1 -1.2,1.2 h-14.9 a1.2,1.2 0 0 1 -1.2,-1.2 z" fill="#e6d670"/>
<text x="1417.3" y="1005" font-size="15.70" fill="#737b82" textLength="87.7" lengthAdjust="spacingAndGlyphs">Other Reports</text>
</svg>
</body></html>
